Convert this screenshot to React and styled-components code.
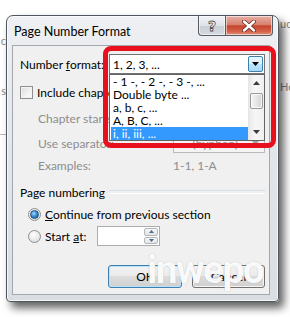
import React from 'react';
import styled, { createGlobalStyle } from 'styled-components';

const GlobalStyle = createGlobalStyle`
  html, body { margin: 0; padding: 0; background: #fff; }
  body {
    font-family: Lato, "Open Sans", sans-serif;
    font-size: 12px;
    color: #000;
  }
  * { box-sizing: border-box; }
`;

const Page = styled.div`
  position: relative;
  width: 290px;
  height: 317px;
  overflow: hidden;
  background: #fff;
`;

/* the Word document that sits behind the dialog */
const Backdrop = styled.div`
  display: flex;
  justify-content: space-between;
  height: 100%;
  color: #8a8a8a;
  font-size: 11px;
`;

const Strip = styled.div`
  display: flex;
  flex-direction: column;
  width: ${p => p.$w}px;
  overflow: hidden;
  padding-top: ${p => p.$top}px;
  gap: ${p => p.$gap}px;
  white-space: nowrap;
  direction: ${p => (p.$rtl ? 'rtl' : 'ltr')};
`;

const Rule = styled.div`
  height: 1px;
  background: #b9b9b9;
`;

const Window = styled.div`
  position: absolute;
  left: 6px;
  top: 15px;
  width: 273px;
  height: 287px;
  display: flex;
  flex-direction: column;
  border: 1px solid #4f565d;
  border-radius: 7px 7px 4px 4px;
  background: linear-gradient(180deg, #eef0f3 0%, #e3e6ea 40%, #dadde1 100%);
  box-shadow: 5px 6px 8px rgba(0, 0, 0, 0.62), inset 0 0 0 1px rgba(255, 255, 255, 0.7);
`;

const TitleBar = styled.div`
  height: 29px;
  display: flex;
  justify-content: space-between;
  padding: 0 5px 0 7px;
`;

const Title = styled.span`
  align-self: center;
  margin-top: 2px;
  font-size: 12.5px;
  color: #000;
`;

const Caption = styled.div`
  display: flex;
  height: 20px;
`;

const CaptionButton = styled.div`
  display: flex;
  align-items: center;
  justify-content: center;
  width: ${p => p.$w}px;
  border: 1px solid #555c64;
  border-top: none;
  box-shadow: inset 0 0 0 1px rgba(255, 255, 255, 0.55);
`;

const HelpButton = styled(CaptionButton)`
  border-right: none;
  border-radius: 0 0 0 4px;
  background: linear-gradient(180deg, #f1f3f6 0%, #dfe3e8 50%, #c9ced5 51%, #d6dbe1 100%);
  font-family: "DejaVu Sans", sans-serif;
  font-weight: bold;
  font-size: 14px;
  color: #fff;
  -webkit-text-stroke: 0.8px #4a4f55;
`;

const CloseButton = styled(CaptionButton)`
  border-radius: 0 0 4px 0;
  background: linear-gradient(180deg, #e8b2a6 0%, #d7816f 45%, #c6452f 52%, #d35f47 80%, #e2957c 100%);
`;

const Client = styled.div`
  position: relative;
  flex: 1;
  margin: 0 8px 6px 5px;
  padding: 8px 4px 0 7px;
  display: flex;
  flex-direction: column;
  background: #f0f0f0;
  border: 1px solid #a3a8ad;
`;

const Row = styled.div`
  display: flex;
  align-items: center;
  height: ${p => p.$h}px;
  margin-top: ${p => p.$mt || 0}px;
  padding-left: ${p => p.$indent || 0}px;
  justify-content: ${p => p.$justify || 'flex-start'};
  gap: ${p => p.$gap || 0}px;
`;

const Label = styled.span`
  width: ${p => (p.$w ? `${p.$w}px` : 'auto')};
  flex-shrink: 0;
  color: ${p => (p.$disabled ? '#8d8d8d' : '#000')};
  white-space: nowrap;
`;

const ComboWrap = styled.div`
  position: relative;
  z-index: 3;
`;

const Combo = styled.div`
  width: ${p => p.$w}px;
  height: 20px;
  display: flex;
  align-items: center;
  justify-content: space-between;
  padding: 1px 1px 1px 3px;
  border: 1px solid ${p => (p.$disabled ? '#b7babc' : '#6f7378')};
  background: ${p => (p.$disabled ? '#f4f4f4' : '#fff')};
  color: ${p => (p.$disabled ? '#8d8d8d' : '#000')};
`;

const ComboText = styled.span`
  display: flex;
  gap: 11px;
  white-space: nowrap;
`;

const DropButton = styled.div`
  width: 15px;
  height: 16px;
  display: flex;
  align-items: center;
  justify-content: center;
  border: 1px solid ${p => (p.$active ? '#3c7fb1' : 'transparent')};
  border-radius: 2px;
  background: ${p =>
    p.$active
      ? 'linear-gradient(180deg, #eaf6fd 0%, #d9f0fc 49%, #bee6fd 50%, #a7d9f5 100%)'
      : 'transparent'};
`;

const ListBox = styled.div`
  position: absolute;
  top: 100%;
  left: 0;
  width: 156px;
  height: 67px;
  display: flex;
  background: #fff;
  border: 1px solid #646464;
`;

const Options = styled.div`
  flex: 1;
  display: flex;
  flex-direction: column;
  padding: 0 0 0 1px;
`;

const Option = styled.div`
  height: 13px;
  line-height: 13px;
  padding-left: 2px;
  white-space: nowrap;
  background: ${p => (p.$selected ? '#3399ff' : 'transparent')};
  color: ${p => (p.$selected ? '#fff' : '#000')};
`;

const ScrollBar = styled.div`
  width: 16px;
  display: flex;
  flex-direction: column;
  background: linear-gradient(90deg, #e9e9e9, #f6f6f6 40%, #f0f0f0);
  border-left: 1px solid #e6e6e6;
`;

const ScrollArrow = styled.div`
  height: 16px;
  display: flex;
  align-items: center;
  justify-content: center;
`;

const Track = styled.div`
  flex: 1;
  padding: 2px 1px 0 1px;
`;

const Thumb = styled.div`
  height: 16px;
  border: 1px solid #9a9a9a;
  border-radius: 2px;
  background: linear-gradient(90deg, #f4f4f4 0%, #e6e6e6 50%, #d4d4d4 100%);
  box-shadow: inset 0 0 0 1px rgba(255, 255, 255, 0.7);
`;

const Highlight = styled.div`
  position: absolute;
  left: -6px;
  top: -8px;
  width: 173px;
  height: 102px;
  border: 5px solid #e8101c;
  border-radius: 8px;
  pointer-events: none;
`;

const Check = styled.span`
  width: 13px;
  height: 13px;
  margin-right: 4px;
  border: 1px solid #8e8f8f;
  background: linear-gradient(135deg, #dcdcdc 0%, #f2f2f2 60%, #ffffff 100%);
  box-shadow: inset 0 0 0 1px #f4f4f4;
`;

const Radio = styled.span`
  width: 13px;
  height: 13px;
  margin-right: 4px;
  border-radius: 50%;
  border: 1px solid #8e8f8f;
  display: flex;
  align-items: center;
  justify-content: center;
  background: radial-gradient(circle at 40% 35%, #ffffff 0%, #e6e6e6 60%, #cfcfcf 100%);
  &::after {
    content: '';
    display: ${p => (p.$checked ? 'block' : 'none')};
    width: 7px;
    height: 7px;
    border-radius: 50%;
    background: radial-gradient(circle at 40% 35%, #a9dbff 0%, #3d8fd6 45%, #17508f 100%);
    border: 1px solid #1c4f82;
  }
`;

const GroupHeader = styled.div`
  flex: 1;
  display: flex;
  align-items: center;
  gap: 4px;
  &::after {
    content: '';
    flex: 1;
    height: 2px;
    border-top: 1px solid #d5dfe5;
    border-bottom: 1px solid #ffffff;
  }
`;

const Spinner = styled.div`
  width: 63px;
  height: 20px;
  display: flex;
  justify-content: flex-end;
  padding: 1px;
  background: #fff;
  border: 1px solid #abadb3;
`;

const SpinButtons = styled.div`
  width: 14px;
  display: flex;
  flex-direction: column;
  gap: 1px;
`;

const SpinButton = styled.div`
  flex: 1;
  display: flex;
  align-items: center;
  justify-content: center;
  border: 1px solid #b5b8bb;
  border-radius: 2px;
  background: linear-gradient(180deg, #f6f6f6 0%, #e4e4e4 100%);
`;

const Button = styled.div`
  width: ${p => p.$w}px;
  height: 23px;
  display: flex;
  align-items: center;
  justify-content: center;
  border: 1px solid ${p => (p.$default ? '#3c7fb1' : '#707070')};
  border-radius: 3px;
  background: linear-gradient(180deg, #f2f2f2 0%, #ebebeb 49%, #dddddd 50%, #cfcfcf 100%);
  box-shadow: inset 0 0 0 1px ${p => (p.$default ? '#b9e2fb' : 'rgba(255,255,255,0.8)')};
`;

const Watermark = styled.div`
  position: absolute;
  left: 147px;
  top: 247px;
  font-family: Roboto, "Open Sans", sans-serif;
  font-weight: 700;
  font-size: 39px;
  letter-spacing: -1.6px;
  color: rgba(255, 255, 255, 0.95);
  text-shadow: 0 0 1px rgba(120, 120, 120, 0.55);
  pointer-events: none;
`;

const Triangle = ({ up, color = '#000', w = 7, h = 4 }) => (
  <svg width={w} height={h} viewBox={`0 0 ${w} ${h}`}>
    <polygon
      points={up ? `0,${h} ${w},${h} ${w / 2},0` : `0,0 ${w},0 ${w / 2},${h}`}
      fill={color}
    />
  </svg>
);

const options = ['- 1 -, - 2 -, - 3 -, ...', 'Double byte ...', 'a, b, c, ...', 'A, B, C, ...', 'i, ii, iii, ...'];

export default function App() {
  return (
    <>
      <GlobalStyle />
      <Page>
        <Backdrop>
          <Strip $w={6} $top={34} $gap={37} $rtl>
            <span>c</span>
            <span>s</span>
            <Rule />
          </Strip>
          <Strip $w={10} $top={17} $gap={50}>
            <span>uc</span>
            <span>Hea</span>
          </Strip>
        </Backdrop>

        <Window>
          <TitleBar>
            <Title>Page Number Format</Title>
            <Caption>
              <HelpButton $w={27}>?</HelpButton>
              <CloseButton $w={48}>
                <svg width="14" height="12" viewBox="0 0 14 12">
                  <path d="M2 1.5 L12 10.5 M12 1.5 L2 10.5" stroke="#6b2a20" strokeWidth="4" strokeLinecap="round" />
                  <path d="M2 1.5 L12 10.5 M12 1.5 L2 10.5" stroke="#fff" strokeWidth="2.4" strokeLinecap="round" />
                </svg>
              </CloseButton>
            </Caption>
          </TitleBar>

          <Client>
            <Row $h={20}>
              <Label $w={89}>Number <u>f</u>ormat:</Label>
              <ComboWrap>
                <Combo $w={156}>
                  <ComboText>1, 2, 3, ...</ComboText>
                  <DropButton $active>
                    <Triangle />
                  </DropButton>
                </Combo>
                <ListBox>
                  <Options>
                    {options.map((o, i) => (
                      <Option key={o} $selected={i === options.length - 1}>
                        {o}
                      </Option>
                    ))}
                  </Options>
                  <ScrollBar>
                    <ScrollArrow>
                      <Triangle up color="#3a3a3a" />
                    </ScrollArrow>
                    <Track>
                      <Thumb />
                    </Track>
                    <ScrollArrow>
                      <Triangle color="#3a3a3a" />
                    </ScrollArrow>
                  </ScrollBar>
                </ListBox>
                <Highlight />
              </ComboWrap>
            </Row>

            <Row $h={17} $mt={10}>
              <Check />
              <Label>Include chapter number</Label>
            </Row>

            <Row $h={20} $mt={7} $indent={18}>
              <Label $w={135} $disabled>
                Chapter starts with style:
              </Label>
              <Combo $w={92} $disabled>
                <ComboText>Heading 1</ComboText>
                <DropButton>
                  <Triangle color="#a0a0a0" />
                </DropButton>
              </Combo>
            </Row>

            <Row $h={20} $mt={5} $indent={18}>
              <Label $w={135} $disabled>
                Use separator:
              </Label>
              <Combo $w={92} $disabled>
                <ComboText>
                  <span>-</span>
                  <span>(hyphen)</span>
                </ComboText>
                <DropButton>
                  <Triangle color="#a0a0a0" />
                </DropButton>
              </Combo>
            </Row>

            <Row $h={16} $mt={4} $indent={18}>
              <Label $w={135} $disabled>
                Examples:
              </Label>
              <Label $disabled>1-1, 1-A</Label>
            </Row>

            <Row $h={16} $mt={11}>
              <GroupHeader>Page numbering</GroupHeader>
            </Row>

            <Row $h={16} $mt={6} $indent={8}>
              <Radio $checked />
              <Label>
                <u>C</u>ontinue from previous section
              </Label>
            </Row>

            <Row $h={20} $mt={4} $indent={8}>
              <Radio />
              <Label $w={52}>
                Start <u>a</u>t:
              </Label>
              <Spinner>
                <SpinButtons>
                  <SpinButton>
                    <Triangle up color="#4a6d8c" w={5} h={3} />
                  </SpinButton>
                  <SpinButton>
                    <Triangle color="#4a6d8c" w={5} h={3} />
                  </SpinButton>
                </SpinButtons>
              </Spinner>
            </Row>

            <Row $h={23} $mt={19} $justify="flex-end" $gap={10}>
              <Button $w={74} $default>
                OK
              </Button>
              <Button $w={73}>Cancel</Button>
            </Row>
          </Client>
        </Window>

        <Watermark>inwepo</Watermark>
      </Page>
    </>
  );
}
